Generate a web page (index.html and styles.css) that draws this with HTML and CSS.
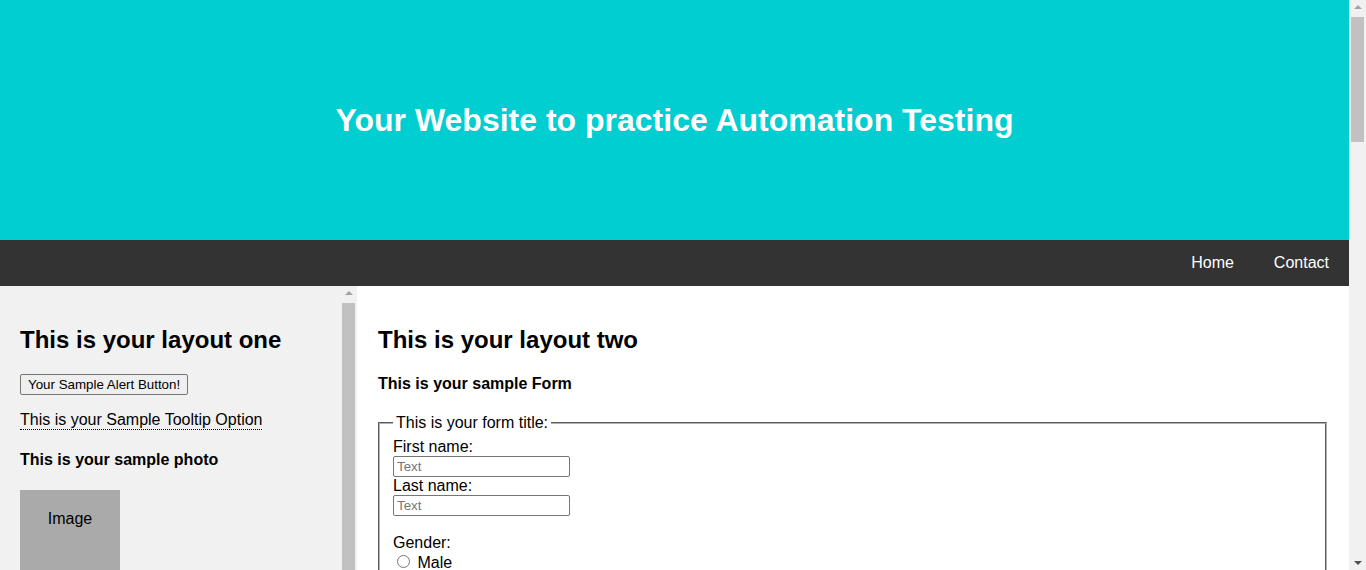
FILE: index.html
```html
<!DOCTYPE html>
<html lang="en">
<head>
<meta charset="utf-8">
<title>Automation Testing Practice</title>
<link rel="stylesheet" href="styles.css">
</head>
<body>
<div class="page">
  <div class="header">
    <h1>Your Website to practice Automation Testing</h1>
  </div>
  <div class="topnav">
    <a href="#">Home</a>
    <a href="#">Contact</a>
  </div>
  <div class="row">
    <div class="leftcolumn">
      <div class="leftcontent">
        <h2>This is your layout one</h2>
        <button type="button" class="btn">Your Sample Alert Button!</button>
        <p><span class="tooltip">This is your Sample Tooltip Option</span></p>
        <h4>This is your sample photo</h4>
        <div class="fakeimg">Image</div>
        <h4>This is your sample text</h4>
        <p class="sample">Lorem ipsum dolor sit amet, consectetur adipiscing elit, sed do eiusmod tempor incididunt ut labore et dolore magna aliqua.</p>
      </div>
      <div class="scrollbar">
        <div class="arrow-btn"><span class="tri-up"></span></div>
        <div class="thumb thumb-left"></div>
      </div>
    </div>
    <div class="rightcolumn">
      <h2>This is your layout two</h2>
      <h4>This is your sample Form</h4>
      <form>
        <fieldset class="fs">
          <legend class="legend">This is your form title:</legend>
          First name:<br>
          <input type="text" class="field" placeholder="Text"><br>
          Last name:<br>
          <input type="text" class="field" placeholder="Text"><br>
          <br>
          Gender:<br>
          <input type="radio" class="radio" name="gender" value="male"> Male<br>
          <input type="radio" class="radio" name="gender" value="female"> Female<br>
          <br>
          Which automation tools do you use?<br>
          <input type="checkbox"> QTP<br>
          <input type="checkbox"> Selenium<br>
          <input type="checkbox"> Cypress<br>
          <br>
          Select your country:<br>
          <select class="select">
            <option>India</option>
            <option>USA</option>
            <option>UK</option>
          </select><br>
          <br>
          Comments:<br>
          <textarea class="area" rows="6" cols="40"></textarea><br>
          <br>
          <input type="submit" value="Submit">
        </fieldset>
      </form>
      <h4>This is your sample table</h4>
      <table class="table">
        <tr><th>Name</th><th>Role</th><th>Country</th></tr>
        <tr><td>Alfreds</td><td>Tester</td><td>Germany</td></tr>
        <tr><td>Maria</td><td>Developer</td><td>Mexico</td></tr>
        <tr><td>Francisco</td><td>Manager</td><td>Italy</td></tr>
      </table>
      <div class="spacer"></div>
    </div>
  </div>
  <div class="footer">
    <h2>Footer</h2>
  </div>
</div>
<div class="scrollbar window-scroll">
  <div class="arrow-btn"><span class="tri-up"></span></div>
  <div class="thumb thumb-window"></div>
  <div class="track-fill"></div>
  <div class="arrow-btn"><span class="tri-down"></span></div>
</div>
</body>
</html>
```

FILE: styles.css
```css
html, body {
  margin: 0;
  padding: 0;
}
body {
  font-family: "Liberation Sans", Arial, sans-serif;
  font-size: 16px;
  color: #000;
  display: flex;
  align-items: flex-start;
}
.page {
  flex: 1;
  min-width: 0;
}
.header {
  height: 240px;
  background: #00ced1;
  display: flex;
  align-items: center;
  justify-content: center;
}
.header h1 {
  margin: 0;
  color: #fff;
  font-size: 32px;
  font-weight: bold;
}
.topnav {
  background: #333;
  display: flex;
  justify-content: flex-end;
}
.topnav a {
  color: #fff;
  text-decoration: none;
  padding: 14px 20px;
  font-size: 16px;
  line-height: 18px;
}
.row {
  display: flex;
  align-items: flex-start;
}
.leftcolumn {
  width: 357px;
  flex: none;
  height: 720px;
  display: flex;
  background: #f1f1f1;
}
.leftcontent {
  flex: 1;
  min-width: 0;
  overflow: hidden;
  padding: 20px 0 0 20px;
}
.rightcolumn {
  flex: 1;
  min-width: 0;
  padding: 20px 21px 0 21px;
  background: #fff;
}
h2 {
  font-size: 24px;
}
h4 {
  font-size: 16px;
}
.btn {
  font-family: "Liberation Sans", Arial, sans-serif;
  font-size: 13.333px;
  background: #efefef;
  border: 1px solid #767676;
  border-radius: 2px;
  padding: 1px 7px;
  height: 21px;
  color: #000;
}
.tooltip {
  display: inline-block;
  border-bottom: 1px dotted #000;
}
.fakeimg {
  width: 100px;
  height: 200px;
  padding: 20px 0;
  box-sizing: border-box;
  background: #aaa;
  text-align: center;
}
.sample {
  margin-right: 20px;
}
.fs {
  margin: 0 1px 0 0;
  padding: 5.6px 12px 10px 13px;
  border: 2px groove #b0b0b0;
}
.legend {
  padding: 0 3px;
}
.field {
  width: 177px;
  height: 21px;
  box-sizing: border-box;
  margin: 0;
  padding: 1px 3px;
  border: 1px solid #767676;
  border-radius: 2px;
  font-family: "Liberation Sans", Arial, sans-serif;
  font-size: 13.333px;
}
.field::placeholder {
  color: #757575;
}
.radio {
  margin: 3px 3px 0 4px;
}
.select {
  width: 177px;
}
.area {
  font-family: "Liberation Sans", Arial, sans-serif;
}
.table {
  border-collapse: collapse;
  width: 60%;
}
.table th, .table td {
  border: 1px solid #ddd;
  padding: 8px;
  text-align: left;
}
.spacer {
  height: 880px;
}
.footer {
  padding: 20px;
  text-align: center;
  background: #ddd;
}

/* scrollbars */
.scrollbar {
  width: 17px;
  flex: none;
  background: #f1f1f1;
  display: flex;
  flex-direction: column;
  align-items: center;
}
.window-scroll {
  position: sticky;
  top: 0;
  height: 100vh;
}
.arrow-btn {
  width: 17px;
  height: 17px;
  flex: none;
  display: flex;
  align-items: center;
  justify-content: center;
}
.tri-up {
  width: 0;
  height: 0;
  border-left: 4px solid transparent;
  border-right: 4px solid transparent;
  border-bottom: 4px solid #a3a3a3;
  margin-top: -4px;
}
.tri-down {
  width: 0;
  height: 0;
  border-left: 4px solid transparent;
  border-right: 4px solid transparent;
  border-top: 4px solid #505050;
  margin-top: 3px;
}
.thumb {
  width: 13px;
  background: #c1c1c1;
  flex: none;
}
.thumb-window {
  height: 125px;
}
.thumb-left {
  height: 640px;
}
.track-fill {
  flex: 1;
}
```
